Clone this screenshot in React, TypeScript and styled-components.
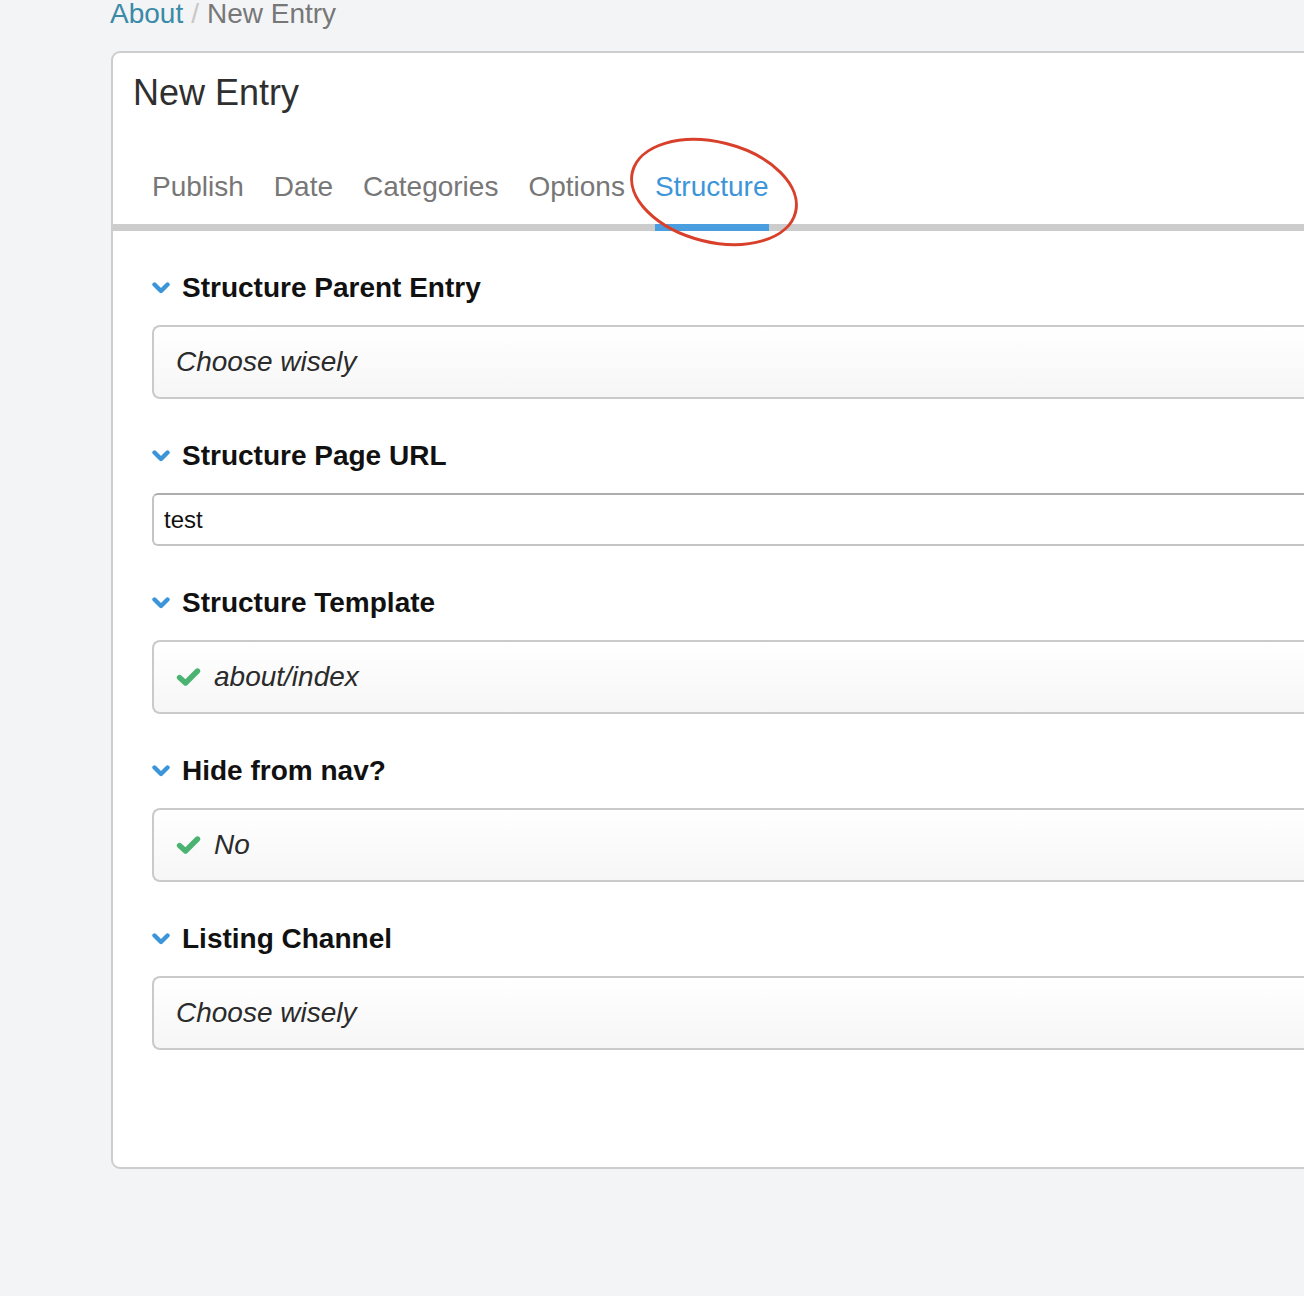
import React from 'react';
import styled, { createGlobalStyle } from 'styled-components';

const GlobalStyle = createGlobalStyle`
  html, body {
    margin: 0;
    padding: 0;
    background: #f3f4f6;
    overflow: hidden;
  }
  body {
    font-family: 'Liberation Sans', Arial, Helvetica, sans-serif;
  }
`;

const Page = styled.div`
  padding-left: 110px;
  width: 1400px;
  min-height: 1296px;
`;

const Breadcrumb = styled.div`
  margin-top: -2px;
  font-size: 28px;
  line-height: 32px;
  height: 32px;
  color: #777;
  white-space: nowrap;
`;

const Crumb = styled.a`
  color: #3a8aa8;
  text-decoration: none;
`;

const Sep = styled.span`
  color: #c8c8c8;
  margin: 0 8px;
`;

const Panel = styled.div`
  margin-top: 21px;
  margin-left: 1px;
  width: 1300px;
  background: #fff;
  border: 2px solid #cdcdcd;
  border-radius: 9px;
  padding-bottom: 117px;
`;

const Title = styled.h1`
  margin: 0;
  padding: 18px 0 0 20px;
  font-size: 36px;
  line-height: 44px;
  font-weight: normal;
  color: #2f2f2f;
`;

const TabBar = styled.div`
  position: relative;
  display: flex;
  gap: 30px;
  margin-top: 55px;
  padding-left: 39px;
  border-bottom: 7px solid #cccccc;
`;

const Tab = styled.div<{ active?: boolean }>`
  font-size: 28px;
  line-height: 34px;
  padding-bottom: 20px;
  margin-bottom: -7px;
  color: ${(p) => (p.active ? '#3d95d9' : '#777')};
  border-bottom: 7px solid ${(p) => (p.active ? '#4a9ee0' : 'transparent')};
  white-space: nowrap;
`;

const Annotation = styled.svg`
  position: absolute;
  left: 514px;
  top: -33px;
  overflow: visible;
  pointer-events: none;
`;

const Body = styled.div`
  padding: 39px 0 0 39px;
  display: flex;
  flex-direction: column;
  gap: 39px;
`;

const Field = styled.div`
  display: flex;
  flex-direction: column;
  gap: 19px;
`;

const Label = styled.div`
  display: flex;
  align-items: center;
  gap: 12px;
  font-size: 28px;
  line-height: 36px;
  font-weight: bold;
  color: #111;
  white-space: nowrap;
`;

const SelectBox = styled.div`
  display: flex;
  align-items: center;
  gap: 13px;
  height: 74px;
  box-sizing: border-box;
  padding-left: 22px;
  border: 2px solid #cacaca;
  border-right: none;
  border-radius: 8px 0 0 8px;
  background: linear-gradient(#ffffff, #f6f6f6);
  font-size: 28px;
  font-style: italic;
  color: #2b2b2b;
  white-space: nowrap;
`;

const TextInput = styled.div`
  display: flex;
  align-items: center;
  height: 53px;
  box-sizing: border-box;
  padding-left: 10px;
  border: 2px solid #c4c4c4;
  border-top-color: #adadad;
  border-right: none;
  border-radius: 6px 0 0 6px;
  background: #fff;
  font-size: 24px;
  color: #111;
`;

const Chevron = () => (
  <svg width='18' height='12' viewBox='0 0 18 12'>
    <path d='M2.5 2.5 L9 9 L15.5 2.5' fill='none' stroke='#3d95d9' strokeWidth='4.4' strokeLinecap='round' strokeLinejoin='round' />
  </svg>
);

const Check = () => (
  <svg width='25' height='20' viewBox='0 0 25 20'>
    <path d='M3.5 10.5 L9.5 16 L21.5 4' fill='none' stroke='#4ab372' strokeWidth='5.4' strokeLinecap='round' strokeLinejoin='round' />
  </svg>
);

type FieldProps = {
  label: string;
  children: React.ReactNode;
};

const FieldBlock: React.FC<FieldProps> = ({ label, children }) => (
  <Field>
    <Label>
      <Chevron />
      {label}
    </Label>
    {children}
  </Field>
);

const tabs = ['Publish', 'Date', 'Categories', 'Options', 'Structure'];

export default function App() {
  return (
    <>
      <GlobalStyle />
      <Page>
        <Breadcrumb>
          <Crumb href='#'>About</Crumb>
          <Sep>/</Sep>
          New Entry
        </Breadcrumb>
        <Panel>
          <Title>New Entry</Title>
          <TabBar>
            {tabs.map((t) => (
              <Tab key={t} active={t === 'Structure'}>
                {t}
              </Tab>
            ))}
            <Annotation width='174' height='110' viewBox='0 0 174 110'>
              <ellipse
                cx='87'
                cy='55'
                rx='84'
                ry='50'
                fill='none'
                stroke='#d9402b'
                strokeWidth='3'
                transform='rotate(14 87 55)'
              />
            </Annotation>
          </TabBar>
          <Body>
            <FieldBlock label='Structure Parent Entry'>
              <SelectBox>Choose wisely</SelectBox>
            </FieldBlock>
            <FieldBlock label='Structure Page URL'>
              <TextInput>test</TextInput>
            </FieldBlock>
            <FieldBlock label='Structure Template'>
              <SelectBox>
                <Check />
                about/index
              </SelectBox>
            </FieldBlock>
            <FieldBlock label='Hide from nav?'>
              <SelectBox>
                <Check />
                No
              </SelectBox>
            </FieldBlock>
            <FieldBlock label='Listing Channel'>
              <SelectBox>Choose wisely</SelectBox>
            </FieldBlock>
          </Body>
        </Panel>
      </Page>
    </>
  );
}
